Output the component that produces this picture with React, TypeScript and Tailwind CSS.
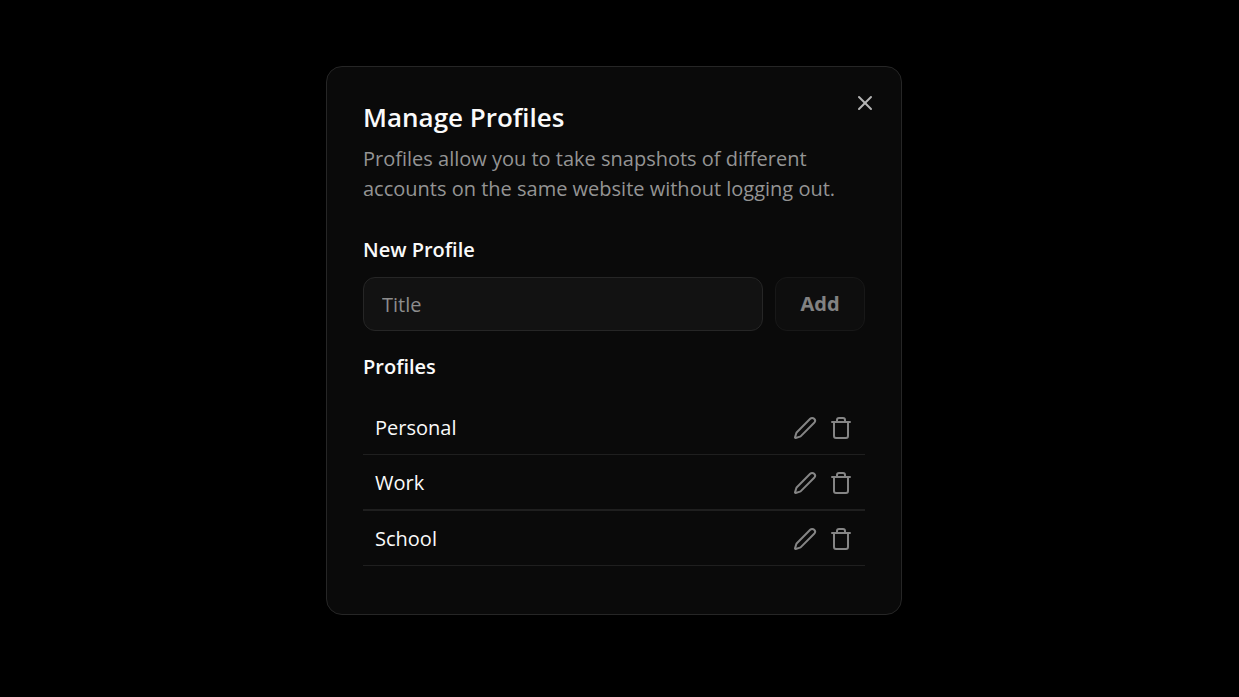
import { useState } from 'react';
import { Pen, Trash, X } from 'lucide-react';

const PROFILES = ['Personal', 'Work', 'School'];

export default function App() {
  const [title, setTitle] = useState('');
  const [profiles, setProfiles] = useState(PROFILES);

  const addProfile = () => {
    setProfiles([...profiles, title.trim()]);
    setTitle('');
  };

  return (
    <main className="flex min-h-screen items-center justify-center bg-black pr-[11px] pb-4 font-['Segoe_UI','Open_Sans',sans-serif] text-xl text-neutral-50">
      <div role="dialog" aria-labelledby="dialog-title" className="relative w-full max-w-xl rounded-2xl border border-[#262626] bg-[#0a0a0a] px-9 pt-[35px] pb-12">
        <button type="button" aria-label="Close" className="absolute top-6 right-6 text-[#b5b5b5]">
          <X size={24} strokeWidth={2} />
        </button>

        {/* Header */}
        <h1 id="dialog-title" className="text-[26px] leading-[30px] font-semibold">Manage Profiles</h1>
        <p className="mt-3 leading-[30px] text-[#949494]">
          Profiles allow you to take snapshots of different accounts on the same website without logging out.
        </p>

        {/* New profile */}
        <label htmlFor="profile-title" className="mt-[31px] block leading-[30px] font-semibold">New Profile</label>
        <div className="mt-3 flex gap-3">
          <input
            id="profile-title"
            type="text"
            placeholder="Title"
            value={title}
            onChange={e => setTitle(e.target.value)}
            className="h-[54px] min-w-0 flex-1 rounded-xl border border-[#262626] bg-[#121212] px-[18px] placeholder:text-[#8c8c8c] outline-none"
          />
          <button
            type="button"
            disabled={!title.trim()}
            onClick={addProfile}
            className="h-[54px] w-[90px] rounded-xl border border-[#262626] bg-[#121212] font-bold disabled:opacity-50"
          >
            Add
          </button>
        </div>

        {/* Profile list */}
        <h2 className="mt-[21px] mb-[18px] leading-[30px] font-semibold">Profiles</h2>
        <ul>
          {profiles.map((name, i) => (
            <li key={i} className="flex items-center border-b border-[#1f1f1f] px-3 pt-[13px] pb-[11px] nth-2:border-b-2">
              <span className="flex-1 leading-[30px]">{name}</span>
              <div className="flex gap-3 text-[#858585]">
                <button type="button" aria-label={`Rename ${name}`}><Pen size={24} /></button>
                <button type="button" aria-label={`Delete ${name}`}><Trash size={24} /></button>
              </div>
            </li>
          ))}
        </ul>
      </div>
    </main>
  );
}
